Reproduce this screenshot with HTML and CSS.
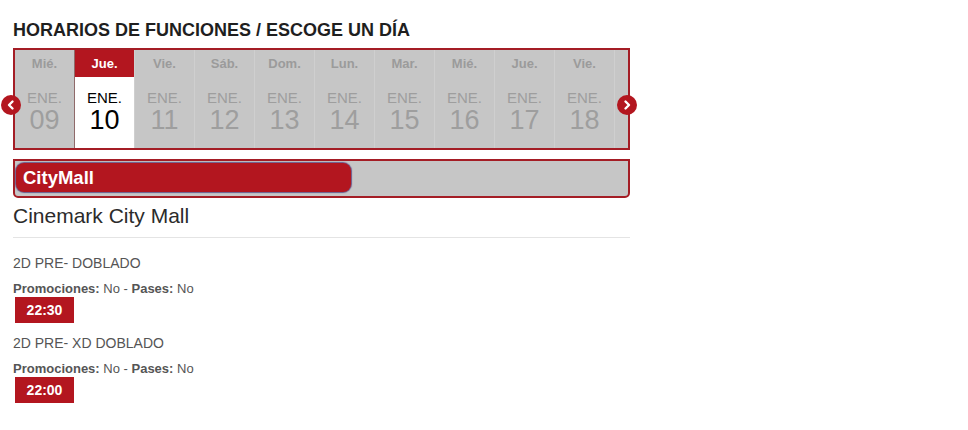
FILE: index.html
```html
<!DOCTYPE html>
<html lang="es">
<head>
<meta charset="utf-8">
<title>Horarios de funciones</title>
<link rel="stylesheet" href="styles.css">
</head>
<body>
<div class="page">
  <h2 class="title">HORARIOS DE FUNCIONES / ESCOGE UN DÍA</h2>
  <div class="calendar-wrap">
    <div class="calendar">
      <div class="day"><div class="day-name">Mié.</div><div class="day-date"><span class="month">ENE.</span><span class="num">09</span></div></div>
      <div class="day active"><div class="day-name">Jue.</div><div class="day-date"><span class="month">ENE.</span><span class="num">10</span></div></div>
      <div class="day"><div class="day-name">Vie.</div><div class="day-date"><span class="month">ENE.</span><span class="num">11</span></div></div>
      <div class="day"><div class="day-name">Sáb.</div><div class="day-date"><span class="month">ENE.</span><span class="num">12</span></div></div>
      <div class="day"><div class="day-name">Dom.</div><div class="day-date"><span class="month">ENE.</span><span class="num">13</span></div></div>
      <div class="day"><div class="day-name">Lun.</div><div class="day-date"><span class="month">ENE.</span><span class="num">14</span></div></div>
      <div class="day"><div class="day-name">Mar.</div><div class="day-date"><span class="month">ENE.</span><span class="num">15</span></div></div>
      <div class="day"><div class="day-name">Mié.</div><div class="day-date"><span class="month">ENE.</span><span class="num">16</span></div></div>
      <div class="day"><div class="day-name">Jue.</div><div class="day-date"><span class="month">ENE.</span><span class="num">17</span></div></div>
      <div class="day"><div class="day-name">Vie.</div><div class="day-date"><span class="month">ENE.</span><span class="num">18</span></div></div>
    </div>
    <span class="arrow arrow-left"><svg viewBox="0 0 20 20" width="20" height="20"><path d="M11.5 6.5 L8 10 L11.5 13.5" fill="none" stroke="#fff" stroke-width="2.4" stroke-linecap="round" stroke-linejoin="round"/></svg></span>
    <span class="arrow arrow-right"><svg viewBox="0 0 20 20" width="20" height="20"><path d="M8.5 6.5 L12 10 L8.5 13.5" fill="none" stroke="#fff" stroke-width="2.4" stroke-linecap="round" stroke-linejoin="round"/></svg></span>
  </div>
  <div class="tabs">
    <div class="tab">CityMall</div>
  </div>
  <h3 class="cinema">Cinemark City Mall</h3>
  <hr class="sep">
  <div class="format">2D PRE- DOBLADO</div>
  <div class="info"><b>Promociones:</b> No - <b>Pases:</b> No</div>
  <div class="time">22:30</div>
  <div class="format">2D PRE- XD DOBLADO</div>
  <div class="info"><b>Promociones:</b> No - <b>Pases:</b> No</div>
  <div class="time">22:00</div>
</div>
</body>
</html>
```

FILE: styles.css
```css
* { box-sizing: border-box; }
body {
  margin: 0;
  background: #fff;
  font-family: "Liberation Sans", Arial, sans-serif;
  color: #333;
}
.page {
  width: 630px;
  padding: 19px 0 0 13px;
}
.title {
  margin: 0;
  font-size: 18px;
  line-height: 22px;
  font-weight: bold;
  color: #1f1f1f;
}
.calendar-wrap {
  position: relative;
  margin-top: 7px;
  width: 617px;
}
.calendar {
  display: flex;
  height: 102px;
  border: 2px solid #a41d25;
  background: #c6c6c6;
}
.day {
  width: 60px;
  display: flex;
  flex-direction: column;
  border-right: 1px solid #cfcfcf;
}
.day-name {
  height: 27px;
  line-height: 28px;
  text-align: center;
  font-size: 13px;
  font-weight: bold;
  color: #9b9b9b;
}
.day-date {
  flex: 1;
  display: flex;
  flex-direction: column;
  align-items: center;
  padding-top: 13px;
}
.month {
  font-size: 15px;
  line-height: 16px;
  color: #9e9e9e;
}
.num {
  margin-top: 1px;
  font-size: 27px;
  line-height: 26px;
  color: #9e9e9e;
}
.day.active { border-left: 1px solid #8f6a6a; margin-left: -1px; width: 61px; }
.day.active .day-name { background: #b3161f; color: #fff; }
.day.active .day-date { background: #fff; }
.day.active .month, .day.active .num { color: #000; }
.arrow {
  position: absolute;
  top: 47px;
  width: 20px;
  height: 20px;
  border-radius: 50%;
  background: #b3161f;
  display: flex;
}
.arrow-left { left: -12px; }
.arrow-right { right: -7px; }
.tabs {
  margin-top: 9px;
  width: 617px;
  height: 39px;
  border: 2px solid #a41d25;
  border-radius: 0 0 5px 5px;
  background: #c6c6c6;
  padding: 2px 1px;
}
.tab {
  width: 335px;
  height: 29px;
  background: #b3161f;
  border-radius: 8px;
  box-shadow: 0 0 1px 1px #6b5a8c;
  color: #fff;
  font-weight: bold;
  font-size: 18.5px;
  line-height: 29px;
  padding-left: 7px;
}
.cinema {
  margin: 6px 0 0;
  font-size: 21px;
  line-height: 24px;
  font-weight: normal;
  color: #2b2b2b;
}
.sep {
  margin: 9px 0 0;
  width: 617px;
  border: 0;
  border-top: 1px solid #e4e4e4;
}
.format {
  margin-top: 17px;
  font-size: 14px;
  line-height: 16px;
  color: #555;
}
.info {
  margin-top: 11px;
  font-size: 13px;
  line-height: 14px;
  color: #555;
}
.info b { color: #555; }
.time {
  margin: 1px 0 0 2px;
  width: 59px;
  height: 26px;
  background: #b3161f;
  color: #fff;
  font-weight: bold;
  font-size: 14px;
  line-height: 26px;
  text-align: center;
}
.time + .format { margin-top: 12px; }
```
